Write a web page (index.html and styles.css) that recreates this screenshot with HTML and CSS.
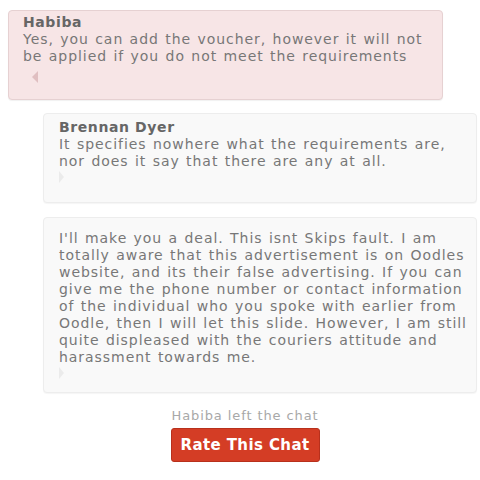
FILE: index.html
```html
<!DOCTYPE html>
<html>
<head>
<meta charset="utf-8">
<link rel="stylesheet" href="styles.css">
</head>
<body>
<div class="chat">
  <div class="msg msg-agent">
    <div class="name">Habiba</div>
    <div class="text">Yes, you can add the voucher, however it will not be applied if you do not meet the requirements</div>
    <div class="arrow arrow-left"></div>
  </div>
  <div class="msg msg-user msg-named">
    <div class="name">Brennan Dyer</div>
    <div class="text">It specifies nowhere what the requirements are, nor does it say that there are any at all.</div>
    <div class="arrow arrow-right"></div>
  </div>
  <div class="msg msg-user msg-plain">
    <div class="text">I'll make you a deal. This isnt Skips fault. I am totally aware that this advertisement is on Oodles website, and its their false advertising. If you can give me the phone number or contact information of the individual who you spoke with earlier from Oodle, then I will let this slide. However, I am still quite displeased with the couriers attitude and harassment towards me.</div>
    <div class="arrow arrow-right"></div>
  </div>
  <div class="status">Habiba left the chat</div>
  <div class="actions">
    <button class="rate-btn">Rate This Chat</button>
  </div>
</div>
</body>
</html>
```
FILE: styles.css
```css
html, body {
  margin: 0;
  padding: 0;
  background: #ffffff;
}
.chat {
  padding: 10px 3px 0 8px;
  display: flex;
  flex-direction: column;
  font-family: "DejaVu Sans", Verdana, sans-serif;
  font-size: 14px;
  letter-spacing: 0.95px;
  word-spacing: 1px;
  line-height: 17px;
  color: #777777;
}
.msg {
  border-radius: 4px;
  box-sizing: border-box;
}
.msg-agent {
  width: 435px;
  height: 90px;
  background: #f7e5e6;
  border: 1px solid #e6d1d2;
  box-shadow: 0 1px 1px rgba(0,0,0,0.06);
  padding: 3px 4px 0 14px;
}
.msg-user {
  margin-left: 35px;
  width: 434px;
  background: #f9f9f9;
  border: 1px solid #ededed;
  box-shadow: 0 1px 1px rgba(0,0,0,0.04);
  padding: 0 4px 0 15px;
}
.msg-named {
  margin-top: 13px;
  height: 90px;
  padding-top: 5px;
}
.msg-plain {
  margin-top: 14px;
  height: 176px;
  padding-top: 12px;
}
.name {
  font-weight: bold;
  letter-spacing: 0.6px;
  word-spacing: 0;
  color: #666666;
}
.arrow {
  width: 0;
  height: 0;
  border-top: 6px solid transparent;
  border-bottom: 6px solid transparent;
}
.arrow-left {
  margin: 6px 0 0 9px;
  border-right: 6px solid #e0bfc1;
}
.arrow-right {
  margin: 1px 0 0 0;
  border-left: 5px solid #ebebeb;
}
.status {
  margin-top: 15px;
  text-align: center;
  padding-left: 5px;
  font-size: 13px;
  letter-spacing: 0.9px;
  word-spacing: 0;
  line-height: 16px;
  color: #a8a8a8;
}
.actions {
  display: flex;
  justify-content: center;
  padding-left: 5px;
  margin-top: 4px;
}
.rate-btn {
  width: 149px;
  height: 34px;
  background: #d43d25;
  border: 1px solid #b8301c;
  border-radius: 3px;
  color: #ffffff;
  font-family: "DejaVu Sans", Tahoma, sans-serif;
  font-weight: bold;
  font-size: 15px;
  letter-spacing: 0.4px;
  padding: 0;
}
```
